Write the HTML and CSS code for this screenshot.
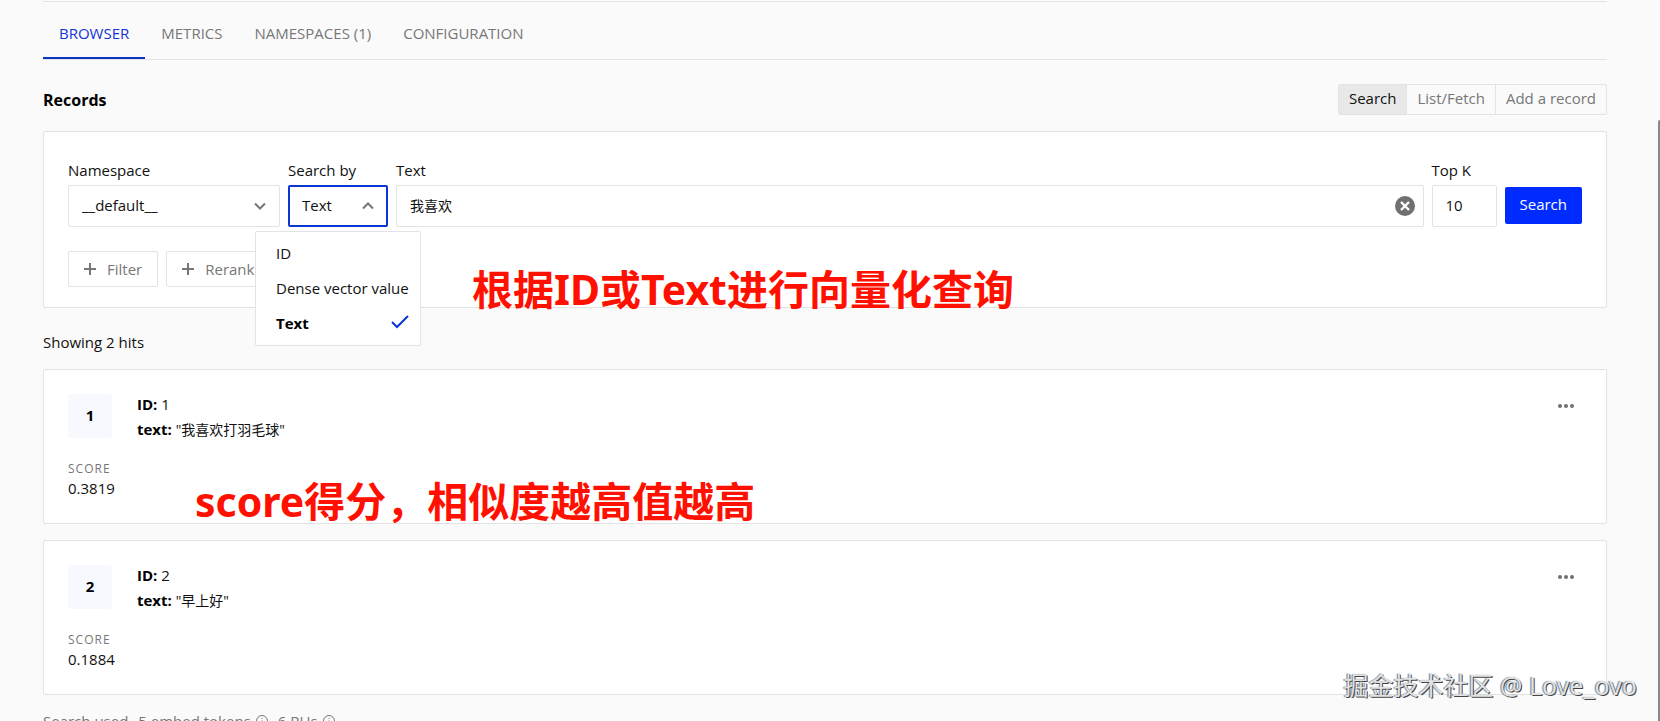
FILE: index.html
```html
<!DOCTYPE html>
<html lang="en">
<head>
<meta charset="utf-8">
<title>Index browser</title>
<link rel="stylesheet" href="styles.css">
</head>
<body>
<div class="page">
  <nav class="tabs" aria-label="Index sections">
    <a class="tab tab-active" href="#browser">BROWSER</a>
    <a class="tab" href="#metrics">METRICS</a>
    <a class="tab" href="#namespaces">NAMESPACES (1)</a>
    <a class="tab" href="#configuration">CONFIGURATION</a>
  </nav>

  <header class="records-head">
    <h1 class="records-title">Records</h1>
    <div class="segments">
      <button class="segment segment-active" type="button">Search</button>
      <button class="segment" type="button">List/Fetch</button>
      <button class="segment" type="button">Add a record</button>
    </div>
  </header>

  <form class="panel query">
    <div class="fields">
      <div class="field field-namespace">
        <label for="namespace">Namespace</label>
        <div class="control">
          <select id="namespace"><option>__default__</option></select>
          <svg class="chevron" viewBox="0 0 14 14"><path d="M2 4.5l5 5 5-5"/></svg>
        </div>
      </div>
      <div class="field field-by">
        <label for="search-by">Search by</label>
        <div class="control control-open">
          <select id="search-by"><option>Text</option><option>ID</option><option>Dense vector value</option></select>
          <svg class="chevron" viewBox="0 0 14 14"><path d="M2 9.5l5-5 5 5"/></svg>
          <ul class="menu" role="listbox" aria-label="Search by">
            <li role="option">ID</li>
            <li role="option">Dense vector value</li>
            <li class="menu-selected" role="option" aria-selected="true">Text
              <svg class="check" viewBox="0 0 18 16"><path d="M1 7l5 5L17 1"/></svg>
            </li>
          </ul>
        </div>
      </div>
      <div class="field field-text">
        <label for="query-text">Text</label>
        <div class="control">
          <input class="cjk" id="query-text" type="text" value="我喜欢">
          <button class="clear" type="button" aria-label="Clear">
            <svg viewBox="0 0 20 20"><circle cx="10" cy="10" r="10"/><path d="M6 6l8 8M14 6l-8 8"/></svg>
          </button>
        </div>
      </div>
      <div class="field field-topk">
        <label for="top-k">Top K</label>
        <div class="control"><input id="top-k" type="text" value="10"></div>
      </div>
      <button class="submit" type="submit">Search</button>
    </div>
    <div class="extras">
      <button class="extra" type="button"><svg viewBox="0 0 12 12"><path d="M6 0v12M0 6h12"/></svg>Filter</button>
      <button class="extra" type="button"><svg viewBox="0 0 12 12"><path d="M6 0v12M0 6h12"/></svg>Rerank</button>
    </div>
    <p class="note note-query">根据ID或Text进行向量化查询</p>
  </form>

  <p class="hits">Showing 2 hits</p>

  <div class="results">
    <article class="panel result">
      <div class="rank-col">
        <div class="rank">1</div>
        <div class="score-label">SCORE</div>
        <div class="score">0.3819</div>
      </div>
      <div class="data">
        <p><b>ID:</b> 1</p>
        <p><b>text:</b> <span class="cjk">"我喜欢打羽毛球"</span></p>
      </div>
      <button class="more" type="button" aria-label="More actions"><svg viewBox="0 0 16 4"><circle cx="2" cy="2" r="2"/><circle cx="8" cy="2" r="2"/><circle cx="14" cy="2" r="2"/></svg></button>
      <p class="note note-score">score得分，相似度越高值越高</p>
    </article>
    <article class="panel result">
      <div class="rank-col">
        <div class="rank">2</div>
        <div class="score-label">SCORE</div>
        <div class="score">0.1884</div>
      </div>
      <div class="data">
        <p><b>ID:</b> 2</p>
        <p><b>text:</b> <span class="cjk">"早上好"</span></p>
      </div>
      <button class="more" type="button" aria-label="More actions"><svg viewBox="0 0 16 4"><circle cx="2" cy="2" r="2"/><circle cx="8" cy="2" r="2"/><circle cx="14" cy="2" r="2"/></svg></button>
    </article>
  </div>

  <footer class="usage">
    <span>Search used</span><span>·</span><span>5 embed tokens</span>
    <svg viewBox="0 0 12 12"><circle cx="6" cy="6" r="5.5"/><path d="M6 5.5V9M6 3v1"/></svg>
    <span>·</span><span>6 RUs</span>
    <svg viewBox="0 0 12 12"><circle cx="6" cy="6" r="5.5"/><path d="M6 5.5V9M6 3v1"/></svg>
  </footer>
</div>
<div class="scroll-thumb"></div>
<div class="watermark">掘金技术社区 @ Love_ovo</div>
</body>
</html>
```
FILE: styles.css
```css
* { box-sizing: border-box; }

body {
  position: relative;
  height: 100vh;
  margin: 0;
  overflow: hidden;
  background: #fafafa;
  color: #111;
  font: 15px/20px "Open Sans", "Noto Sans CJK SC", sans-serif;
}

p, h1, ul { margin: 0; padding: 0; }
button, input, select { font: inherit; color: inherit; }
svg { display: block; fill: none; stroke: currentColor; }

.page { padding: 1px 53px 0 43px; }

.tabs {
  display: flex;
  border-top: 1px solid #e2e4e4;
  border-bottom: 1px solid #e2e4e4;
}
.tab {
  padding: 21px 16px 14px;
  border-bottom: 2px solid transparent;
  color: #777;
  text-decoration: none;
}
.tab-active { color: #1433d6; border-color: #0a35c0; }

.records-head {
  display: flex;
  justify-content: space-between;
  align-items: center;
  padding: 24px 0 16px;
}
.records-title { font-size: 16px; line-height: 24px; font-weight: 700; color: #000; }

.segments { display: flex; border: 1px solid #e2e4e4; border-radius: 2px; }
.segment {
  height: 29px;
  padding: 0 10px 3px;
  border: 0;
  border-left: 1px solid #e2e4e4;
  background: transparent;
  color: #777;
}
.segment-active { border-left: 0; background: #e8e8e8; color: #111; }

.panel {
  position: relative;
  border: 1px solid #e2e4e4;
  border-radius: 2px;
  background: #fff;
}
.query { padding: 28px 24px 20px; }
.fields { display: flex; align-items: flex-end; gap: 8px; }
.field { display: flex; flex-direction: column; gap: 5px; }
.field-namespace { width: 212px; }
.field-by { width: 100px; }
.field-text { flex: 1; }
.field-topk { width: 65px; }

.control { position: relative; }
.control select, .control input {
  display: block;
  width: 100%;
  height: 42px;
  padding: 0 13px 2px;
  border: 1px solid #e2e4e4;
  border-radius: 2px;
  background: #fff;
  appearance: none;
  outline: 0;
}
.control-open select { border: 2px solid #0a35d6; padding: 0 12px 2px; }
.control .cjk, .cjk { font-size: 14px; }

.chevron {
  position: absolute;
  top: 14px;
  right: 13px;
  width: 14px;
  height: 14px;
  color: #777;
  stroke-width: 2;
  pointer-events: none;
}
.clear {
  position: absolute;
  top: 11px;
  right: 9px;
  width: 20px;
  height: 20px;
  padding: 0;
  border: 0;
  background: none;
}
.clear circle { fill: #707070; stroke: none; }
.clear path { stroke: #fff; stroke-width: 2.4; }

.menu {
  position: absolute;
  z-index: 2;
  top: 46px;
  right: -33px;
  width: 166px;
  padding: 3px 0 5px;
  border: 1px solid #e2e4e4;
  border-radius: 2px;
  background: #fff;
  list-style: none;
}
.menu li {
  display: flex;
  justify-content: space-between;
  align-items: center;
  height: 35px;
  padding: 0 11px 0 20px;
  white-space: nowrap;
}
.menu-selected { font-weight: 700; color: #000; }
.check { width: 18px; height: 16px; color: #0a35d6; stroke-width: 2; }

.submit {
  height: 37px;
  margin-bottom: 3px;
  padding: 0 15px 3px;
  border: 0;
  border-radius: 2px;
  background: #002bff;
  color: #fff;
}

.extras { display: flex; gap: 8px; padding-top: 24px; }
.extra {
  display: flex;
  align-items: center;
  gap: 11px;
  height: 36px;
  padding: 0 15px 1px;
  border: 1px solid #e2e4e4;
  border-radius: 2px;
  background: #fff;
  color: #777;
}
.extra svg { width: 12px; height: 12px; stroke-width: 2; }

.hits { padding: 24px 0 17px; }

.results { display: flex; flex-direction: column; gap: 16px; }
.result { display: flex; gap: 24px; padding: 24px 24px 25px; }
.rank-col { display: flex; flex-direction: column; width: 45px; }
.rank {
  width: 44px;
  height: 44px;
  margin-bottom: 21px;
  border-radius: 2px;
  background: #f7f9ff;
  color: #000;
  font-weight: 700;
  line-height: 42px;
  text-align: center;
}
.score-label { color: #777; font-size: 12px; line-height: 19px; letter-spacing: 1px; }
.data { flex: 1; margin-top: -2px; line-height: 25px; }
.data b { color: #000; }
.more {
  align-self: flex-start;
  padding: 10px 8px;
  border: 0;
  background: none;
  color: #707070;
}
.more svg { width: 16px; height: 4px; fill: currentColor; stroke: none; }

.note {
  position: absolute;
  z-index: 1;
  color: #ff1000;
  font-family: "Noto Sans", "Noto Sans CJK SC", sans-serif;
  font-size: 41px;
  font-weight: 700;
  line-height: 48px;
  white-space: nowrap;
}
.note-query { top: 133px; left: 428px; }
.note-score { top: 107px; left: 151px; }

.usage {
  display: flex;
  align-items: center;
  gap: 3px;
  padding-top: 16px;
  color: #777;
}
.usage svg { width: 12px; height: 12px; margin-left: 2px; }

.scroll-thumb {
  position: absolute;
  top: 120px;
  right: 0;
  bottom: 0;
  width: 2px;
  border-top-left-radius: 2px;
  background: #888;
}
.watermark {
  position: absolute;
  right: 23px;
  bottom: 20px;
  color: #e2e2e2;
  font-family: "Noto Sans", "Noto Sans CJK SC", sans-serif;
  font-size: 25px;
  line-height: 32px;
  text-shadow: 1px 1px 0 #444, -1px 0 1px #777;
}
```
